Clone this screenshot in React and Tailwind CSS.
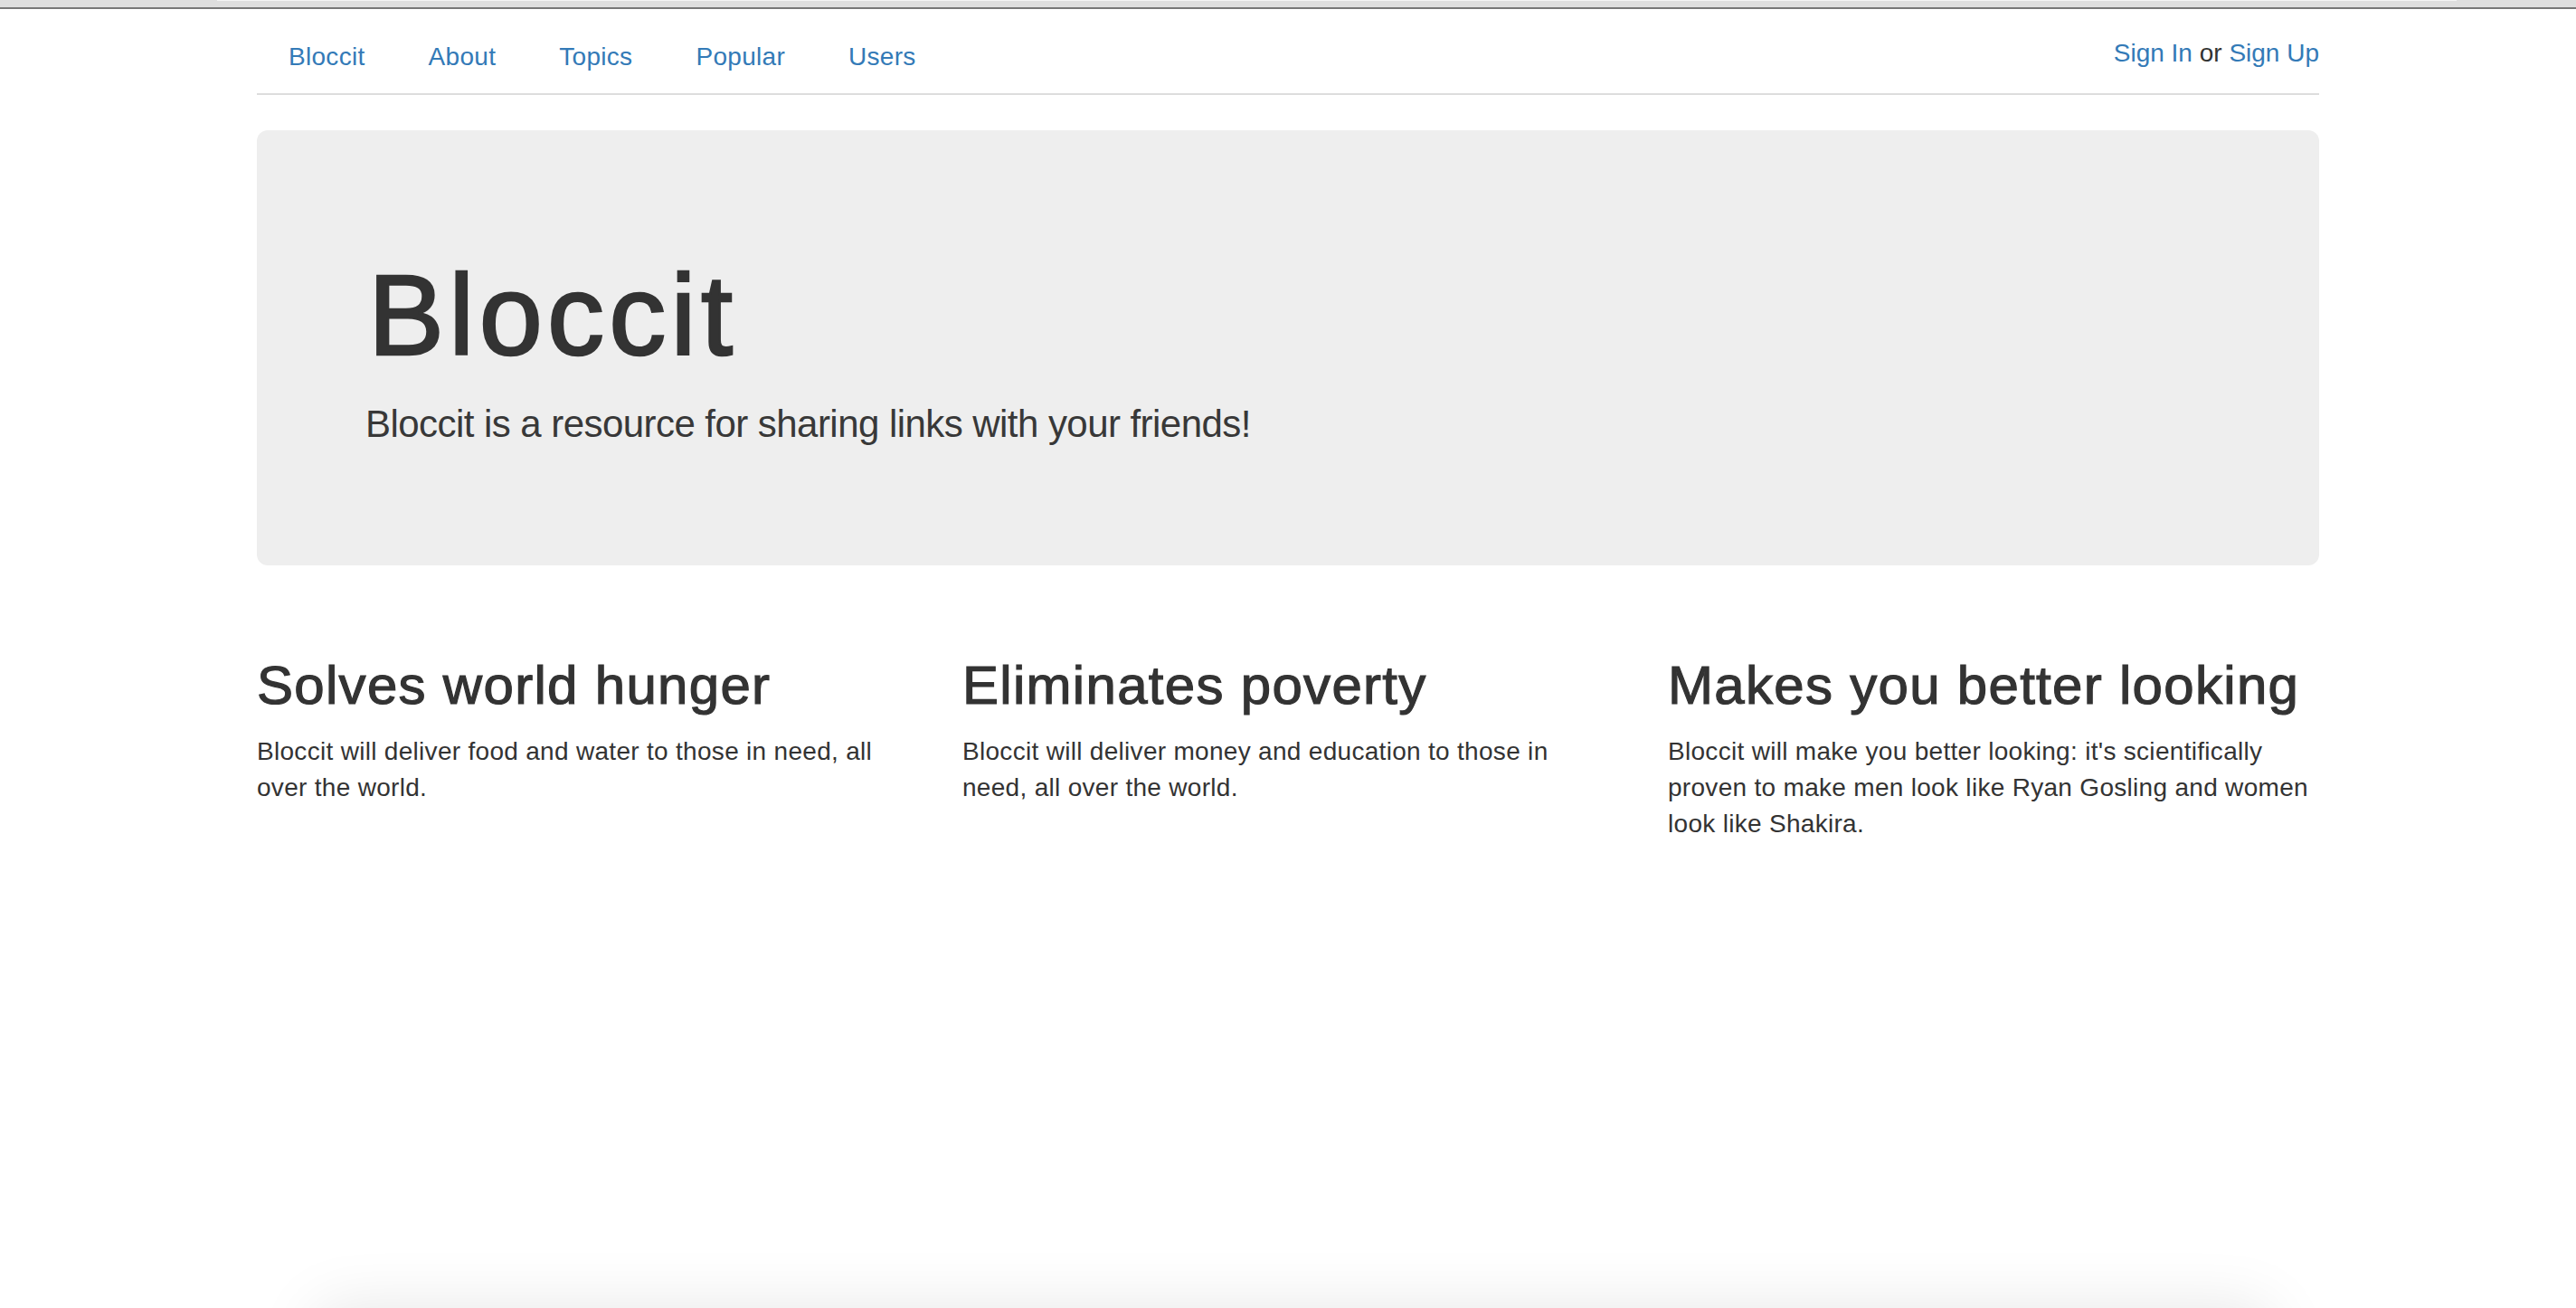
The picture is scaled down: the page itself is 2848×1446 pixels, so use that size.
export default function App() {
  const links = ['Bloccit', 'About', 'Topics', 'Popular', 'Users'];

  const features = [
    {
      title: 'Solves world hunger',
      text: 'Bloccit will deliver food and water to those in need, all over the world.',
    },
    {
      title: 'Eliminates poverty',
      text: 'Bloccit will deliver money and education to those in need, all over the world.',
    },
    {
      title: 'Makes you better looking',
      text: "Bloccit will make you better looking: it's scientifically proven to make men look like Ryan Gosling and women look like Shakira.",
    },
  ];

  return (
    <div className="relative h-[1446px] overflow-hidden bg-white font-['Liberation_Sans',Arial,sans-serif] text-[#333333]">
      {/* browser chrome strip */}
      <div className="h-[10px] bg-[#dedede] border-b-2 border-[#777777]">
        <div className="ml-[240px] mr-[132px] h-px bg-[#f4f4f4]" />
      </div>

      <div className="mx-auto w-[2280px]">
        <nav className="mt-[13px] flex items-start justify-between border-b-2 border-[#dddddd]">
          <ul className="flex">
            {links.map((l) => (
              <li key={l}>
                <a href="#" className="block px-[35px] py-[20px] text-[28px] leading-[40px] tracking-[0.3px] text-[#337ab7]">
                  {l}
                </a>
              </li>
            ))}
          </ul>
          <div className="pt-[16px] text-[28px] leading-[40px]">
            <a href="#" className="text-[#337ab7]">Sign In</a> or{' '}
            <a href="#" className="text-[#337ab7]">Sign Up</a>
          </div>
        </nav>

        <div className="mt-[39px] rounded-[12px] bg-[#eeeeee] px-[120px] py-[96px]">
          <h1 className="mt-[40px] mb-[20px] pl-[3px] text-[126px] leading-[1.1] tracking-[5.3px] [-webkit-text-stroke:2.5px_#333333]">
            Bloccit
          </h1>
          <p className="mb-[30px] text-[42px] leading-[60px] tracking-[-0.55px] text-[#383838]">
            Bloccit is a resource for sharing links with your friends!
          </p>
        </div>

        <div className="mt-[60px] grid grid-cols-3 gap-[60px]">
          {features.map((f) => (
            <div key={f.title}>
              <h2 className="mt-[40px] mb-[20px] text-[60px] leading-[1.1] tracking-[1.3px] [-webkit-text-stroke:1.2px_#333333]">
                {f.title}
              </h2>
              <p className="mb-[20px] text-[28px] leading-[40px] tracking-[0.3px]">{f.text}</p>
            </div>
          ))}
        </div>
      </div>

      {/* shadow of a window peeking from below */}
      <div className="absolute left-[350px] top-[1446px] h-[100px] w-[2160px] rounded-[20px] bg-white shadow-[0_0_70px_rgba(0,0,0,0.1)]" />
    </div>
  );
}
